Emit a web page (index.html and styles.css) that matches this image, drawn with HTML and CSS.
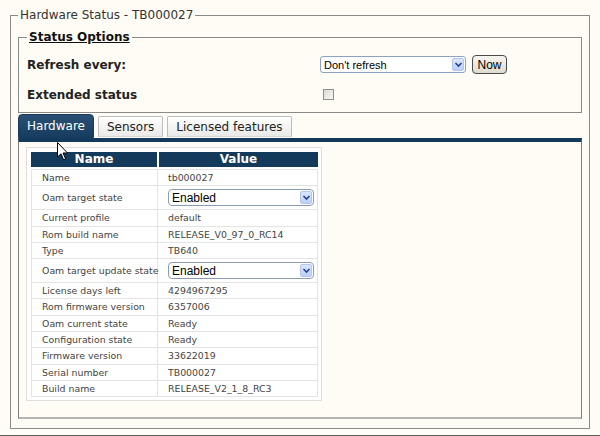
FILE: index.html
```html
<!DOCTYPE html>
<html lang="en">
<head>
  <meta charset="UTF-8" />
  <title>Hardware Status - TB000027</title>
  <link rel="stylesheet" href="styles.css">
</head>
<body>

  <fieldset class="status">
    <legend>Hardware Status - TB000027</legend>

    <!-- Status options -->
    <fieldset class="options">
      <legend>Status Options</legend>
      <div class="opt-grid">
        <label class="opt-label" for="refresh">Refresh every:</label>
        <div class="opt-ctl">
          <span class="sel">
            <select id="refresh"><option>Don't refresh</option></select>
            <span class="sel-arrow"><svg width="9" height="9" viewBox="0 0 9 9"><path d="M1.5 3 L4.5 6 L7.5 3" fill="none" stroke="#27448f" stroke-width="1.6"/></svg></span>
          </span>
          <button class="now">Now</button>
        </div>
        <label class="opt-label" for="ext">Extended status</label>
        <div class="opt-ctl">
          <input type="checkbox" id="ext">
        </div>
      </div>
    </fieldset>

    <!-- Tabs -->
    <div class="tabs">
      <div class="tab active">Hardware</div>
      <div class="tab">Sensors</div>
      <div class="tab">Licensed features</div>
    </div>

    <div class="panel">
      <div class="grid">
        <table>
          <colgroup><col class="c-name"><col class="c-value"></colgroup>
          <thead>
            <tr><th>Name</th><th>Value</th></tr>
          </thead>
          <tbody>
            <tr><td>Name</td><td>tb000027</td></tr>
            <tr><td class="ctl">Oam target state</td>
              <td class="ctl">
                <span class="sel">
                  <select><option>Enabled</option></select>
                  <span class="sel-arrow"><svg width="9" height="9" viewBox="0 0 9 9"><path d="M1.5 3 L4.5 6 L7.5 3" fill="none" stroke="#27448f" stroke-width="1.6"/></svg></span>
                </span>
              </td></tr>
            <tr><td>Current profile</td><td>default</td></tr>
            <tr><td>Rom build name</td><td>RELEASE_V0_97_0_RC14</td></tr>
            <tr><td>Type</td><td>TB640</td></tr>
            <tr><td class="ctl">Oam target update state</td>
              <td class="ctl">
                <span class="sel">
                  <select><option>Enabled</option></select>
                  <span class="sel-arrow"><svg width="9" height="9" viewBox="0 0 9 9"><path d="M1.5 3 L4.5 6 L7.5 3" fill="none" stroke="#27448f" stroke-width="1.6"/></svg></span>
                </span>
              </td></tr>
            <tr><td>License days left</td><td>4294967295</td></tr>
            <tr><td>Rom firmware version</td><td>6357006</td></tr>
            <tr><td>Oam current state</td><td>Ready</td></tr>
            <tr><td>Configuration state</td><td>Ready</td></tr>
            <tr><td>Firmware version</td><td>33622019</td></tr>
            <tr><td>Serial number</td><td>TB000027</td></tr>
            <tr><td>Build name</td><td>RELEASE_V2_1_8_RC3</td></tr>
          </tbody>
        </table>
      </div>
    </div>
  </fieldset>

  <!-- mouse pointer -->
  <svg class="cursor" width="12" height="19" viewBox="0 0 12 19">
    <path d="M0.5 0.5 L0.5 15 L4 11.8 L6.6 17.8 L8.6 16.9 L6 11 L10.5 11 Z" fill="#fff" stroke="#000" stroke-width="1"/>
  </svg>

</body>
</html>
```

FILE: styles.css
```css
* {
  box-sizing: border-box;
}
html, body {
  margin: 0;
  height: 100%;
}
body {
  position: relative;
  padding: 8px 10px 0;
  background: #fffcf5;
  color: #333;
  font-family: "DejaVu Sans", Verdana, sans-serif;
  font-size: 12px;
  border-bottom: 1px solid #5e5e5e;
  overflow: hidden;
}

fieldset {
  margin: 0;
  border: 1px solid #8a8a8a;
  min-inline-size: 0;
}
legend {
  padding: 0 2px;
  line-height: 14px;
}

/* outer box */
.status {
  padding: 8px 7px 9px;
}
.status > legend {
  color: #333;
}

/* Status options */
.options {
  padding: 10px 8px 8px;
}
.options > legend {
  font-weight: bold;
  text-decoration: underline;
  color: #111;
  line-height: 15px;
}
.opt-grid {
  display: grid;
  grid-template-columns: 293px auto;
  grid-auto-rows: 19px;
  row-gap: 11px;
  align-items: center;
}
.opt-label {
  font-weight: bold;
  color: #222;
}
.opt-ctl {
  display: flex;
  align-items: center;
  gap: 6px;
}

.sel {
  position: relative;
  display: block;
  width: 146px;
}
.sel select {
  display: block;
  width: 100%;
  height: 17px;
  margin: 0;
  padding: 0 16px 0 3px;
  appearance: none;
  -webkit-appearance: none;
  border: 1px solid #8da2c2;
  border-radius: 3px;
  background: #fff;
  color: #000;
  font-family: "Liberation Sans", Arial, sans-serif;
  font-size: 11px;
}
.sel-arrow {
  position: absolute;
  right: 2px;
  top: 2px;
  width: 12px;
  height: 13px;
  display: flex;
  align-items: center;
  justify-content: center;
  border: 1px solid #b4c6ee;
  border-radius: 2px;
  background: linear-gradient(#dbe6fe, #bccffa);
}

.now {
  height: 19px;
  width: 35px;
  padding: 0;
  border: 1px solid #4a4a4a;
  border-radius: 4px;
  background: linear-gradient(#f6f5f0, #dedbd0);
  color: #000;
  font-family: "Liberation Sans", Arial, sans-serif;
  font-size: 12px;
}

input[type="checkbox"] {
  appearance: none;
  -webkit-appearance: none;
  width: 11px;
  height: 11px;
  margin: 0 0 0 3px;
  border: 1px solid #8f8f8f;
  background: linear-gradient(135deg, #dcdcd6, #f7f7f4);
}

/* Tabs */
.tabs {
  display: flex;
  align-items: flex-end;
  gap: 4px;
  margin-top: 1px;
}
.tab {
  height: 21px;
  margin-bottom: 1px;
  padding: 0 8px;
  line-height: 20px;
  color: #222;
  border: 1px solid #bdbdbd;
  border-bottom-color: #d6d6d6;
  border-radius: 2px 2px 0 0;
  background: linear-gradient(#ffffff, #e9e9e7);
}
.tab.active {
  height: 24px;
  margin-bottom: 0;
  line-height: 22px;
  color: #fff;
  border-color: #163d5f;
  border-radius: 4px 4px 0 0;
  background: linear-gradient(#2a5173, #163d5f);
}

.panel {
  border: 1px solid #7c7c7c;
  border-top: 4px solid #143a5b;
  border-bottom: 2px solid #b5b5b5;
  padding: 5px 7px 16px;
}

/* Table */
.grid {
  width: fit-content;
  padding: 4px 3px 3px 4px;
  border: 1px solid #dedede;
  background: #fff;
}
.grid table {
  width: 287px;
  table-layout: fixed;
  border-collapse: separate;
  border-spacing: 0;
  font-size: 9.4px;
  color: #444;
}
.c-name { width: 126px; }
.c-value { width: 161px; }

.grid th {
  height: 17px;
  padding: 0;
  background: #143a5b;
  color: #fff;
  font-size: 12px;
  font-weight: bold;
  line-height: 15px;
  border-bottom: 2px solid #fff;
}
.grid th + th {
  border-left: 2px solid #fff;
}
.grid td {
  padding: 1px 3px 0 10px;
  line-height: 14.3px;
  white-space: nowrap;
  border-bottom: 1px solid #e4e4e4;
  border-left: 1px solid #e4e4e4;
}
.grid td:first-child {
  padding-right: 0;
}
.grid td:last-child {
  border-right: 1px solid #e4e4e4;
}
.grid tbody tr:first-child td {
  border-top: 1px solid #e4e4e4;
}
.grid td.ctl {
  padding-top: 3px;
  padding-bottom: 3px;
  line-height: 17px;
}
.grid td .sel select {
  font-size: 12px;
  border-color: #8b9bb5;
  border-radius: 4px;
}

.cursor {
  position: absolute;
  left: 57px;
  top: 142px;
}
```
